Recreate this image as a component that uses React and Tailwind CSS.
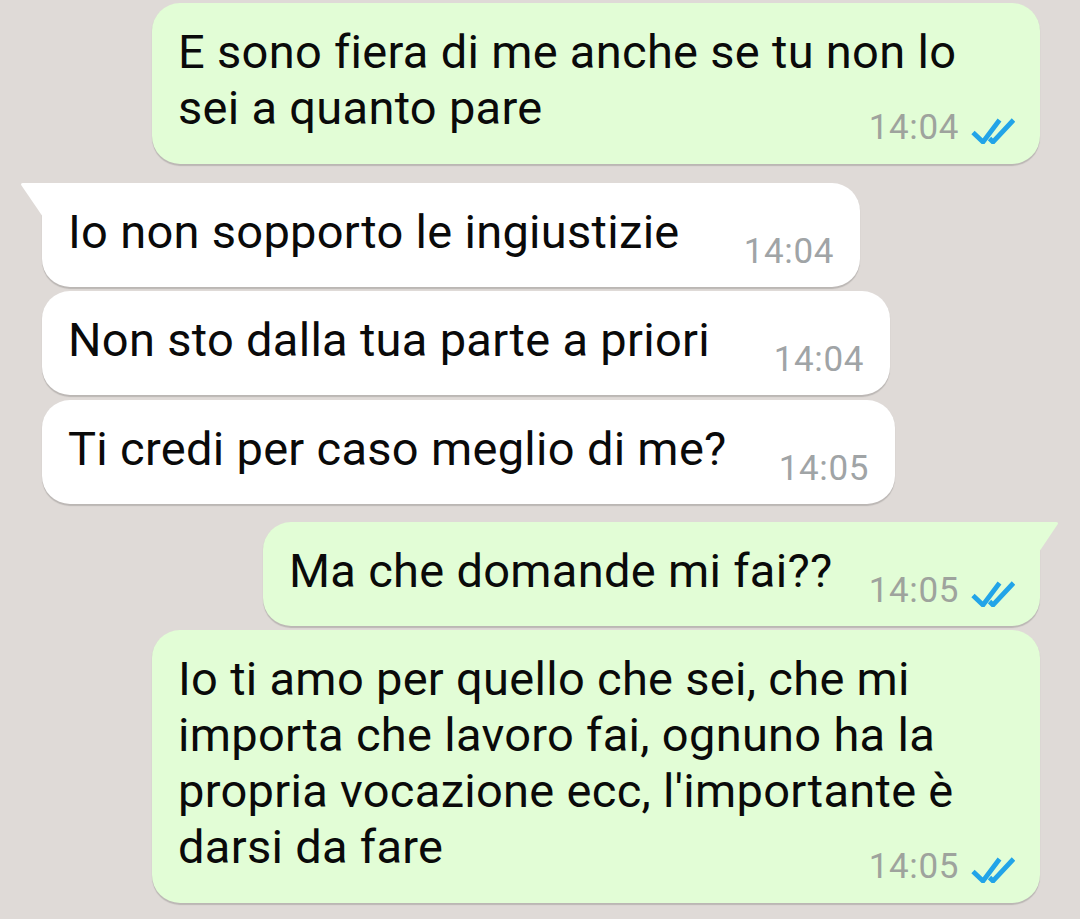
import React from "react";

function Ticks() {
  return (
    <svg width="44" height="26" viewBox="0 0 44 26" className="ml-[12px] mb-[4px] shrink-0">
      <path d="M2 14.5 L12 24 L28.5 2" fill="none" stroke="#22a4e8" strokeWidth="4.8" strokeLinejoin="miter" />
      <path d="M18.5 20.5 L22 24 L42.5 2" fill="none" stroke="#22a4e8" strokeWidth="4.8" strokeLinejoin="miter" />
    </svg>
  );
}

function Time({ t, out }) {
  return (
    <div className="flex items-end leading-[40px]">
      <span className={"text-[35px] tracking-[0.6px] " + (out ? "text-[#9ea39d]" : "text-[#a0a4a6]")}>{t}</span>
      {out && <Ticks />}
    </div>
  );
}

function InTail() {
  return (
    <svg width="24" height="34" viewBox="0 0 24 34" className="absolute -left-[22px] top-0">
      <path d="M24 0 L3 0 Q0 0 1.5 2.5 L23 34 Z" fill="#ffffff" />
    </svg>
  );
}

function OutTail() {
  return (
    <svg width="24" height="34" viewBox="0 0 24 34" className="absolute -right-[21px] top-0">
      <path d="M0 0 L19 0 Q22 0 20.5 2.5 L0 33 Z" fill="#e2fdd6" />
    </svg>
  );
}

const shadow = "shadow-[0_1.5px_1px_rgba(0,0,0,0.16)]";
const textCls = "text-[47px] tracking-[0.3px] leading-[56px] text-[#0a0a0a] whitespace-nowrap";

function SingleBubble({ text, time, out, w, tail, mt }) {
  return (
    <div
      className={
        "relative flex justify-between items-end pt-[21px] pb-[15px] pl-[26px] " +
        (out ? "pr-[25px] bg-[#e2fdd6] " : "pr-[26px] bg-white ") +
        (tail ? (out ? "rounded-[28px] rounded-tr-none " : "rounded-[28px] rounded-tl-none ") : "rounded-[28px] ") +
        shadow + " " + w + " " + mt
      }
    >
      {tail && (out ? <OutTail /> : <InTail />)}
      <div className={textCls + " mb-[12px]"}>{text}</div>
      <Time t={time} out={out} />
    </div>
  );
}

function MultiBubble({ lines, time, mt }) {
  return (
    <div className={"relative flex flex-col pt-[21px] pb-[16px] pl-[26px] pr-[25px] bg-[#e2fdd6] rounded-[28px] w-[888px] " + shadow + " " + mt}>
      <div className={textCls}>
        {lines.map((l, i) => (
          <div key={i}>{l}</div>
        ))}
      </div>
      <div className="flex justify-end -mt-[28px]">
        <Time t={time} out />
      </div>
    </div>
  );
}

export default function App() {
  return (
    <div
      className="w-[1080px] h-[919px] overflow-hidden bg-[#dfdad7] flex flex-col pt-[3px]"
      style={{ fontFamily: "Roboto, 'Noto Sans', sans-serif" }}
    >
      <div className="flex justify-end pr-[40px]">
        <MultiBubble
          lines={["E sono fiera di me anche se tu non lo", "sei a quanto pare"]}
          time="14:04"
          mt=""
        />
      </div>
      <div className="flex flex-col items-start pl-[42px]">
        <SingleBubble text="Io non sopporto le ingiustizie" time="14:04" w="w-[818px]" tail mt="mt-[19px]" />
        <SingleBubble text="Non sto dalla tua parte a priori" time="14:04" w="w-[848px]" mt="mt-[4px]" />
        <SingleBubble text="Ti credi per caso meglio di me?" time="14:05" w="w-[853px]" mt="mt-[5px]" />
      </div>
      <div className="flex flex-col items-end pr-[40px]">
        <SingleBubble text="Ma che domande mi fai??" time="14:05" w="w-[777px]" out tail mt="mt-[18px]" />
        <MultiBubble
          lines={[
            "Io ti amo per quello che sei, che mi",
            "importa che lavoro fai, ognuno ha la",
            "propria vocazione ecc, l'importante è",
            "darsi da fare",
          ]}
          time="14:05"
          mt="mt-[4px]"
        />
      </div>
    </div>
  );
}
